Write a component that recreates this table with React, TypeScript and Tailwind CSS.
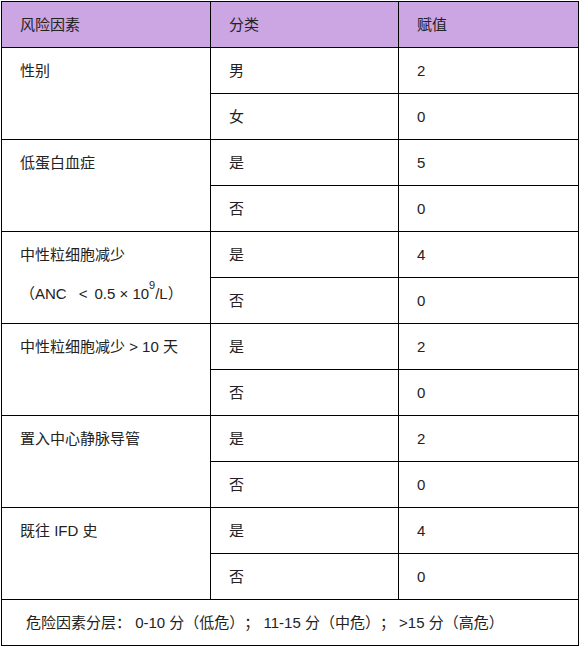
const rows = [
  { factor: "性别", items: [["男", "2"], ["女", "0"]] },
  { factor: "低蛋白血症", items: [["是", "5"], ["否", "0"]] },
  { factor: "anc", items: [["是", "4"], ["否", "0"]] },
  { factor: "中性粒细胞减少 > 10 天", items: [["是", "2"], ["否", "0"]] },
  { factor: "置入中心静脉导管", items: [["是", "2"], ["否", "0"]] },
  { factor: "既往 IFD 史", items: [["是", "4"], ["否", "0"]] },
];

const cell = "border-r border-b border-black h-[46px] pl-[18px] leading-[45px]";

const App = () => {
  return (
    <div
      className="ml-px mt-px w-[578px] border-l border-t border-black text-[15px] text-[#222] bg-white [text-spacing-trim:space-all]"
      style={{ fontFamily: '"Liberation Sans", Arial, "Noto Sans CJK SC", sans-serif' }}
    >
      <div className="grid grid-cols-[209px_188px_180px]">
        {/* header */}
        <div className={`${cell} bg-[#cca5e3]`}>风险因素</div>
        <div className={`${cell} bg-[#cca5e3]`}>分类</div>
        <div className={`${cell} bg-[#cca5e3]`}>赋值</div>

        {rows.map((row, i) => (
          <>
            <div key={`f${i}`} className="row-span-2 border-r border-b border-black pl-[18px]">
              {row.factor === "anc" ? (
                <>
                  <div className="leading-[45px]">中性粒细胞减少</div>
                  <div className="mt-[6px] leading-[22px] whitespace-nowrap">
                    （ANC<span className="ml-[12px] mr-[7px]">&lt;</span>0.5 × 10
                    <sup className="text-[11px] relative -top-[10px]">9</sup>/L）
                  </div>
                </>
              ) : (
                <div className="leading-[45px]">{row.factor}</div>
              )}
            </div>
            {row.items.map(([k, v], j) => (
              <>
                <div key={`k${i}${j}`} className={`${cell} col-start-2`}>{k}</div>
                <div key={`v${i}${j}`} className={cell}>{v}</div>
              </>
            ))}
          </>
        ))}
      </div>
      <div className="border-r border-b border-black h-[46px] pl-[24px] leading-[45px] whitespace-pre">
        危险因素分层： 0-10 分（低危）； 11-15 分（中危）； &gt;15 分（高危）
      </div>
    </div>
  );
};

export default App;
